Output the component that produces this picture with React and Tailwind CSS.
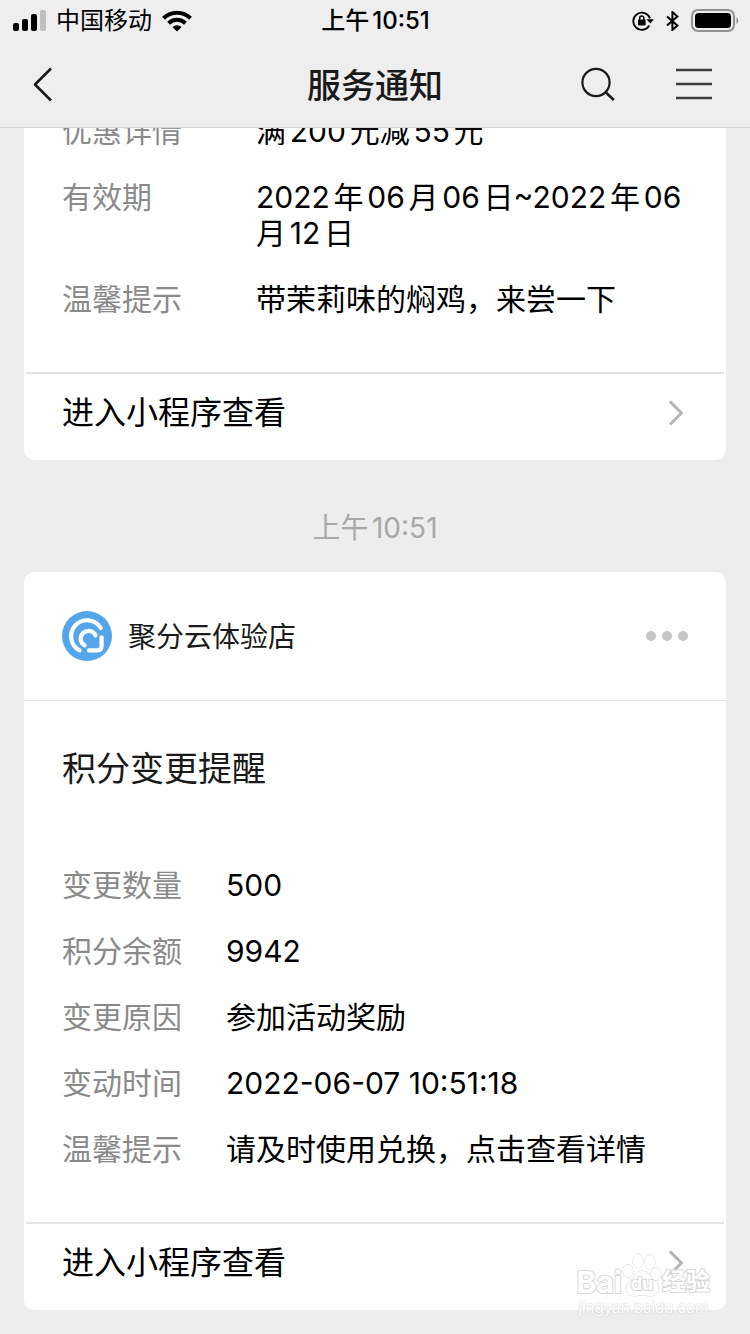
import clsx from "clsx";

const COUPON_ROWS = [
  { label: "优惠详情", value: "满200元减55元" },
  { label: "有效期", value: "2022年06月06日~2022年06月12日" },
  { label: "温馨提示", value: "带茉莉味的焖鸡，来尝一下" },
];

const POINTS_ROWS = [
  { label: "变更数量", value: "500" },
  { label: "积分余额", value: "9942" },
  { label: "变更原因", value: "参加活动奖励" },
  { label: "变动时间", value: "2022-06-07 10:51:18" },
  { label: "温馨提示", value: "请及时使用兑换，点击查看详情" },
];

function StatusBar() {
  return (
    <div className="grid grid-cols-3 items-center h-[41px] pl-3 pr-[11px] text-black">
      <div className="flex items-center gap-2.5">
        <svg width="34" height="22" viewBox="0 0 34 22" aria-label="信号">
          <rect x="1" y="13" width="6" height="8" rx="2" />
          <rect x="10" y="9" width="6" height="12" rx="2" />
          <rect x="19" y="4" width="6" height="17" rx="2" />
          <rect x="28" y="0" width="6" height="21" rx="2" fill="#bfbfbf" />
        </svg>
        <span className="text-[24px] leading-8 whitespace-nowrap">中国移动</span>
        <svg width="30" height="22" viewBox="0 0 30 22" fill="none" stroke="#000" aria-label="Wi-Fi">
          <path d="M1.5 8.2a19.3 19.3 0 0 1 27 0" strokeWidth="4" />
          <path d="M6.6 13.2a12 12 0 0 1 16.8 0" strokeWidth="4" />
          <path d="M15 21.5l-4.6-4.4a6.6 6.6 0 0 1 9.2 0z" fill="#000" stroke="none" />
        </svg>
      </div>

      <span className="text-[24px] leading-8 font-medium text-center">上午10:51</span>

      <div className="flex items-center justify-end">
        <svg width="22" height="20" viewBox="0 0 22 20" fill="none" stroke="#000" aria-label="旋转锁定">
          <path d="M17.3 14.6A8.6 8.6 0 1 1 18 7.4" strokeWidth="1.9" />
          <path d="M14.4 8.2h7.4l-3.4 4.4z" fill="#000" stroke="none" />
          <rect x="6" y="8.6" width="7.6" height="5.8" rx="0.8" fill="#000" stroke="none" />
          <path d="M7.7 9V7.2a2.1 2.1 0 0 1 4.2 0V9" strokeWidth="1.5" />
        </svg>
        <svg className="ml-3" width="13" height="20" viewBox="0 0 13 20" fill="none" stroke="#000" aria-label="蓝牙">
          <path d="M1 5.4l10.4 9.2L6.4 19V1l5 4.4L1 14.6" strokeWidth="2" />
        </svg>
        <svg className="ml-3" width="48" height="24" viewBox="0 0 48 24" aria-label="电池">
          <rect x="1" y="1" width="42" height="21" rx="6" fill="none" stroke="#929292" strokeWidth="2" />
          <rect x="4" y="4" width="36" height="15" rx="3.5" />
          <path d="M45.5 8.2c2.4 1.4 2.4 5.4 0 6.8z" fill="#8c8c8c" />
        </svg>
      </div>
    </div>
  );
}

function NavBar() {
  return (
    <div className="grid grid-cols-3 items-center h-[86px] px-8">
      <button type="button" aria-label="返回" className="justify-self-start">
        <svg width="22" height="36" viewBox="0 0 22 36" fill="none" stroke="#1a1a1a" strokeWidth="2.6">
          <path d="M19 2.5L3 18.5l16 16" strokeLinejoin="round" />
        </svg>
      </button>
      <h1 className="pt-1 text-[34px] leading-10 font-medium text-[#1a1a1a] text-center">服务通知</h1>
      <div className="flex items-center justify-end gap-15 pr-1.5">
        <button type="button" aria-label="搜索">
          <svg width="36" height="36" viewBox="0 0 36 36" fill="none" stroke="#1a1a1a" strokeWidth="2.2">
            <circle cx="16" cy="16.5" r="13.6" />
            <path d="M25.4 26l8.4 8" strokeWidth="2.6" />
          </svg>
        </button>
        <button type="button" aria-label="菜单">
          <svg width="36" height="34" viewBox="0 0 36 34" stroke="#3c3c3c" strokeWidth="2.6">
            <path d="M0 3h36M0 17h36M0 31h36" />
          </svg>
        </button>
      </div>
    </div>
  );
}

function DetailRows({ rows, wide }) {
  return (
    <dl className="flex flex-col gap-[30px] px-[38px] pb-[55px] text-[30px] leading-9">
      {rows.map(({ label, value }) => (
        <div key={label} className="flex">
          <dt className={clsx("shrink-0 text-[#8a8a8a]", wide ? "w-[194px]" : "w-[164px]")}>
            {label}
          </dt>
          <dd className="min-w-0 break-all text-black">{value}</dd>
        </div>
      ))}
    </dl>
  );
}

function CardLink() {
  return (
    <a
      href="#mini-program"
      className="flex items-center justify-between h-[88px] mx-0.5 pl-9 pr-10 pb-2 border-t-2 border-[#e4e4e4]"
    >
      <span className="text-[32px] leading-10 text-black">进入小程序查看</span>
      <svg width="16" height="26" viewBox="0 0 16 26" fill="none" stroke="#b4b4b4" strokeWidth="3">
        <path d="M2 1.5L13.5 13 2 24.5" strokeLinejoin="round" />
      </svg>
    </a>
  );
}

function ShopLogo() {
  return (
    <svg width="50" height="50" viewBox="0 0 50 50" fill="none" stroke="#fff" aria-hidden="true">
      <circle cx="25" cy="25" r="25" fill="#55a5ea" stroke="none" />
      <g strokeWidth="4.2" strokeLinecap="round" strokeLinejoin="round">
        <path d="M17.6 39.4A16 16 0 1 1 38.8 17" />
        <path d="M22.6 34.4A7.8 7.8 0 1 1 33.6 24.4" />
        <path d="M39.6 26.4V34.4q0 5-5 5H27" />
      </g>
    </svg>
  );
}

function Watermark() {
  return (
    <div className="absolute right-10 bottom-4 flex flex-col items-center pointer-events-none select-none">
      <div className="flex items-end font-bold text-white [-webkit-text-stroke:2px_#d8d8d8] [paint-order:stroke_fill]">
        <span className="text-[30px] leading-8">Bai</span>
        <span className="relative">
          <svg width="40" height="46" viewBox="0 0 40 46" fill="#fff" stroke="#d4d4d4" aria-hidden="true">
            <ellipse cx="6" cy="19" rx="5" ry="6.5" />
            <ellipse cx="16" cy="9" rx="5" ry="7" />
            <ellipse cx="28" cy="10" rx="5" ry="7" />
            <ellipse cx="34" cy="22" rx="5" ry="6.5" />
            <path d="M20 19c-7 0-8 7-12 10-6 5-5 15 4 15 4 0 5-1 8-1s5 1 9 1c8 0 10-10 4-15-4-3-6-10-13-10z" />
          </svg>
          <span className="absolute inset-x-0 bottom-0.5 text-center text-[18px] leading-6">du</span>
        </span>
        <span className="text-[24px] leading-8">经验</span>
      </div>
      <span className="text-[15px] leading-5 text-white [text-shadow:0_0_2px_#bdbdbd]">jingyan.baidu.com</span>
    </div>
  );
}

export default function App() {
  return (
    <div className="relative min-h-screen overflow-hidden bg-[#ededed] font-['Inter','Noto_Sans_CJK_SC',sans-serif] [text-autospace:normal]">
      <header className="relative z-10 bg-[#eeeeee] border-b border-[#d2d2d2]">
        <StatusBar />
        <NavBar />
      </header>

      {/* list is scrolled a little way under the header */}
      <main className="-mt-[15px] px-6 pb-6">
        <section className="bg-white rounded-b-[10px]">
          <DetailRows rows={COUPON_ROWS} wide />
          <CardLink />
        </section>

        <p className="pt-12 pb-6 text-center text-[28px] leading-10 text-[#a8a8a8]">
          <time>上午10:51</time>
        </p>

        <section className="bg-white rounded-[10px]">
          <div className="flex items-center h-[129px] px-[38px] border-b border-[#e6e6e6]">
            <ShopLogo />
            <h2 className="ml-4 pt-0.5 text-[28px] leading-10 text-[#1a1a1a]">聚分云体验店</h2>
            <button type="button" aria-label="更多" className="flex gap-1.5 ml-auto">
              {[0, 1, 2].map((i) => (
                <span key={i} className="block w-2.5 h-2.5 rounded-full bg-[#c6c6c6]" />
              ))}
            </button>
          </div>
          <h3 className="px-[38px] pt-12 pb-[78px] text-[34px] leading-10 text-[#1a1a1a]">
            积分变更提醒
          </h3>
          <DetailRows rows={POINTS_ROWS} />
          <CardLink />
        </section>
      </main>

      <Watermark />
    </div>
  );
}
